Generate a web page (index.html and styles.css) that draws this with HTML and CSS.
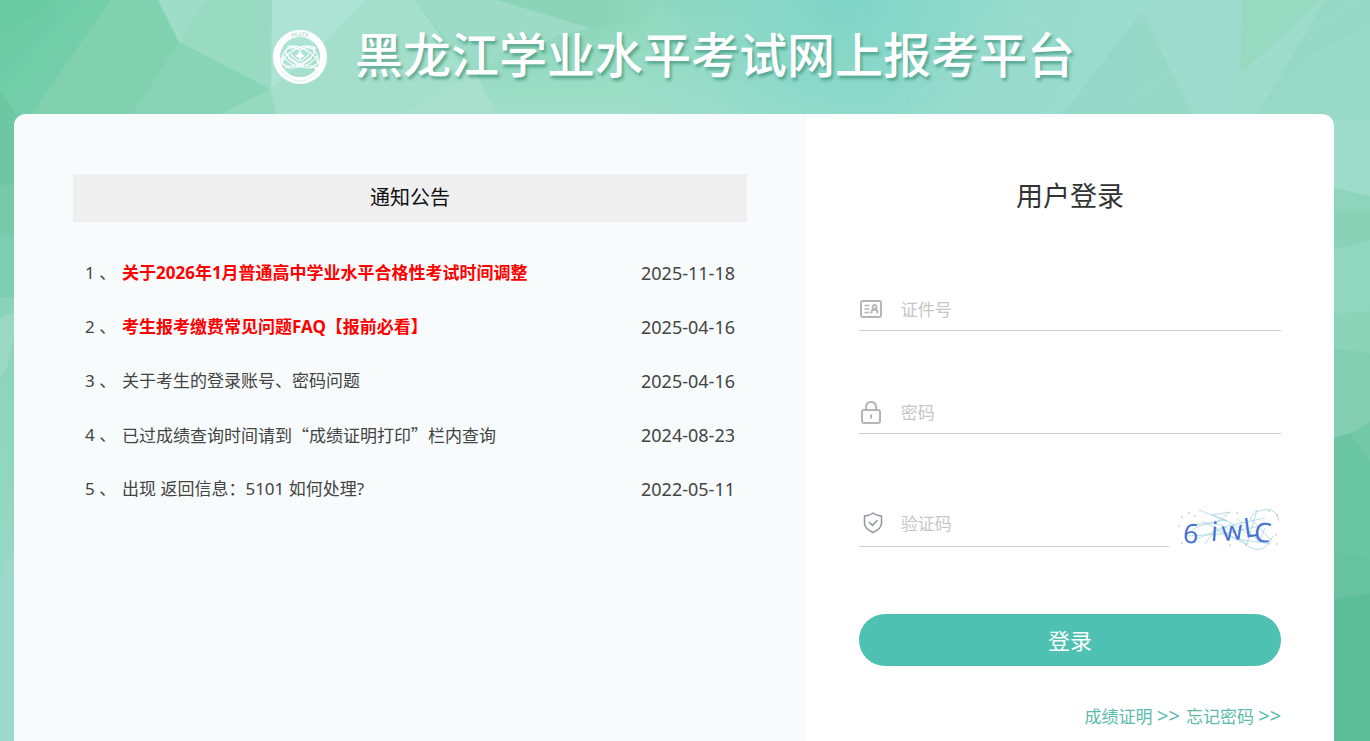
FILE: index.html
```html
<!DOCTYPE html>
<html lang="zh-CN">
<head>
<meta charset="utf-8">
<meta name="viewport" content="width=device-width, initial-scale=1">
<title>黑龙江学业水平考试网上报考平台</title>
<link rel="stylesheet" href="styles.css">
</head>
<body>
<svg class="backdrop" viewBox="0 0 1370 741" preserveAspectRatio="none" aria-hidden="true">
  <defs>
    <linearGradient id="dark" x1="0" y1="0" x2="1" y2="0.4"><stop offset="0" stop-color="#6bcba5"/><stop offset="1" stop-color="#83d2b3"/></linearGradient>
    <linearGradient id="mid" x1="0" y1="0" x2="0" y2="1"><stop offset="0" stop-color="#87d4b6"/><stop offset="1" stop-color="#a2dfcb"/></linearGradient>
    <linearGradient id="left" x1="0" y1="0" x2="0" y2="1"><stop offset="0" stop-color="#8bd3b8"/><stop offset="1" stop-color="#9bdbca"/></linearGradient>
    <radialGradient id="teal" gradientUnits="userSpaceOnUse" cx="850" cy="0" r="260"><stop offset="0" stop-color="#80d5c7"/><stop offset="0.4" stop-color="#8ad8c9" stop-opacity="0.8"/><stop offset="1" stop-color="#9bdccc" stop-opacity="0"/></radialGradient>
  </defs>
  <rect width="1370" height="741" fill="#9ddccb"/>
  <polygon points="0,0 158,0 179,42 270,89 222,120 0,120" fill="url(#dark)"/>
  <polygon points="0,0 60,0 0,38" fill="#6acba4"/>
  <polygon points="110,0 158,0 179,42 131,120 28,120" fill="#7fd1b0"/>
  <polygon points="179,42 270,89 222,120 128,120" fill="#87d4b6"/>
  <polygon points="158,0 206,0 179,42" fill="#9fddc8"/>
  <polygon points="206,0 272,0 271,89 179,42" fill="#99dac3"/>
  <polygon points="270,89 278,120 210,120" fill="#95d9c0"/>
  <polygon points="272,0 366,0 328,40 271,89" fill="#ade3d5"/>
  <polygon points="271,89 328,40 366,0 416,0 500,120 278,120" fill="#a4dfcc"/>
  <polygon points="416,0 500,0 860,0 860,120 500,120" fill="url(#mid)"/>
  <polygon points="416,0 498,0 590,28 560,35 475,72 450,45" fill="#9cdbc5"/>
  <polygon points="498,0 670,0 640,20 590,28" fill="#8bd4b7"/>
  <polygon points="475,72 500,120 390,120" fill="#a8e0cd"/>
  <polygon points="860,0 1000,0 860,120" fill="#93dacb"/>
  <rect x="590" width="520" height="120" fill="url(#teal)"/>
  <polygon points="660,0 705,40 730,120 620,120 600,60" fill="#a1dfc9" opacity="0.2"/>
  <polygon points="1035,0 1155,0 1060,120 920,120" fill="#98dccd" opacity="0.7"/>
  <polygon points="1142,12 1150,120 1058,120" fill="#95d8c7"/>
  <polygon points="1142,12 1195,120 1150,120" fill="#97d8c4"/>
  <polygon points="1142,12 1156,0 1242,0 1235,120 1195,120" fill="#9ddccd"/>
  <polygon points="1242,0 1320,0 1240,75" fill="#98d9c1"/>
  <polygon points="1325,0 1370,0 1370,24 1306,58 1262,112 1255,120" fill="#95d8c4"/>
  <polygon points="1306,58 1370,24 1370,120 1255,120" fill="#98dac6"/>
  <path d="M910 100 1035 18M1130 100 1290 0M1160 58 1240 8M1240 72 1370 -6" stroke="#b4e7d8" stroke-width="2" opacity="0.2"/>
  <polygon points="0,90 20,120 20,190 0,190" fill="#6dc7a3"/>
  <polygon points="0,186 20,180 20,241 0,234" fill="#76c9a9"/>
  <polygon points="0,234 20,239 20,300 0,300" fill="#7fcdb0"/>
  <polygon points="0,297 20,298 20,741 0,741" fill="url(#left)"/>
  <polygon points="0,318 20,310 8,365 0,380" fill="#99d9c2"/>
  <polygon points="0,575 20,540 20,741 0,741" fill="#9bdacb"/>
  <polygon points="1330,187 1370,196 1370,260 1330,250" fill="#8fd4bc"/>
  <polygon points="1330,210 1370,210 1370,280 1330,302" fill="#89d2b8"/>
  <polygon points="1330,250 1370,240 1370,355 1330,350" fill="#91d6be"/>
  <polygon points="1330,315 1370,311 1370,355 1330,350" fill="#8bd3b9"/>
  <polygon points="1330,348 1370,353 1370,422 1330,443" fill="#83ceb2"/>
  <polygon points="1330,440 1352,432 1370,422 1370,741 1330,741" fill="#69c5a2"/>
  <polygon points="1350,434 1370,422 1370,461" fill="#73c9a9"/>
  <polygon points="1330,550 1370,559 1370,741 1330,741" fill="#67c29f"/>
  <polygon points="1330,599 1370,594 1370,741 1330,741" fill="#5dbe9c"/>
</svg>

<header class="banner">
  <svg class="emblem" viewBox="0 0 54 54" role="img" aria-label="HLJZK">
    <circle cx="27" cy="27" r="23.500" fill="none" stroke="#fff" stroke-width="7"/>
    <defs>
      <path id="arc-top" d="M6 27A21 21 0 0 1 48 27"/>
    </defs>
    <text class="emblem-text"><textPath href="#arc-top" startOffset="50%">HLJZK</textPath></text>
    <path d="M9 41Q27 61 45 41" fill="none" stroke="#a4dfcc" stroke-width="1" stroke-dasharray="2 1" opacity="0.7"/>
    <g fill="none" stroke="#fff" stroke-width="1.200">
      <path d="M12 21Q18 15 27 20Q36 15 42 21M12 21Q16 30 27 34Q40 39 45 33Q47 29 42 21M42 21Q38 30 27 34Q14 39 9 33Q7 29 12 21"/>
      <path d="M14 17Q25 14 36 22Q44 27 45 33M40 17Q29 14 18 22Q10 27 9 33"/>
      <path d="M10 26Q16 35 27 37Q38 35 44 26M12 37Q22 40 30 34L39 28M42 37Q32 40 24 34L15 28"/>
      <path d="M18 24Q22 30 27 31Q32 30 36 24"/>
    </g>
    <path d="M27 20 29 24 32 26 28 28 27 31 26 28 22 26 25 24Z" fill="#fff"/>
    <g fill="#fff"><circle cx="41" cy="18" r="1.600"/><circle cx="9" cy="29" r="1.600"/><circle cx="43" cy="38" r="1.600"/></g>
  </svg>
  <h1 class="banner-title">黑龙江学业水平考试网上报考平台</h1>
</header>

<main class="card">
  <section class="notices">
    <h2 class="notices-title">通知公告</h2>
    <ol class="notice-list">
      <li class="notice"><span class="notice-number">1 、</span><a class="notice-link urgent" href="#">关于2026年1月普通高中学业水平合格性考试时间调整</a><time class="notice-date">2025-11-18</time></li>
      <li class="notice"><span class="notice-number">2 、</span><a class="notice-link urgent" href="#">考生报考缴费常见问题FAQ【报前必看】</a><time class="notice-date">2025-04-16</time></li>
      <li class="notice"><span class="notice-number">3 、</span><a class="notice-link" href="#">关于考生的登录账号、密码问题</a><time class="notice-date">2025-04-16</time></li>
      <li class="notice"><span class="notice-number">4 、</span><a class="notice-link cjk" href="#">已过成绩查询时间请到“成绩证明打印”栏内查询</a><time class="notice-date">2024-08-23</time></li>
      <li class="notice"><span class="notice-number">5 、</span><a class="notice-link" href="#">出现 返回信息：5101 如何处理?</a><time class="notice-date">2022-05-11</time></li>
    </ol>
  </section>

  <form class="login">
    <h2 class="login-title">用户登录</h2>
    <div class="field">
      <label class="field-icon" for="id-number" aria-label="证件号">
        <svg viewBox="0 0 24 24" fill="none" stroke="#b5b5b5" stroke-width="2"><rect x="2" y="4" width="20" height="16" rx="2"/><path d="M5.500 8.500h5M5.500 12h5M5.500 15.500h5" stroke-width="1.500"/><circle cx="15.500" cy="10" r="2" stroke-width="1.800"/><path d="M12.500 16.500v-1.500q0-2.500 3-2.500t3 2.500v1.500" stroke-width="1.800"/></svg>
      </label>
      <input class="field-input" id="id-number" type="text" placeholder="证件号">
    </div>
    <div class="field">
      <label class="field-icon" for="password" aria-label="密码">
        <svg viewBox="0 0 24 24" fill="none" stroke="#b5b5b5" stroke-width="2"><rect x="3" y="10" width="18" height="13" rx="2"/><path d="M7 10V7q0-5 5-5t5 5v3M12 14.500v4"/></svg>
      </label>
      <input class="field-input" id="password" type="password" placeholder="密码">
    </div>
    <div class="captcha-row">
      <div class="field">
        <label class="field-icon" for="captcha" aria-label="验证码">
          <svg viewBox="0 0 24 24" fill="none" stroke="#8f949f" stroke-width="1.500" stroke-linejoin="round" stroke-linecap="round"><path d="M14 2Q17 4.500 22.500 5v7.500Q22 18 14 21.500Q6 18 5.500 12.500V5Q11 4.500 14 2ZM10.500 11.500 13.500 14.500 18 9.500"/></svg>
        </label>
        <input class="field-input" id="captcha" type="text" placeholder="验证码">
      </div>
      <svg class="captcha-image" viewBox="0 -4 104 50" role="img" aria-label="6iwLC">
        <path d="M12 20 48 14 85 35M20 33 50 20 88 12M25 15 60 33 94 38M22 4 50 15 35 9 53 6 40 16M15 24Q40 8 62 32T96 30M28 38 38 24 70 38 80 4 73 12 94 34M10 30 45 28 92 18M60 12 82 36 88 22M80 6Q98 -2 102 15" fill="none" stroke="#8cc6dc" stroke-width="1" opacity="0.6"/>
        <g fill="#c9b3d6" opacity="0.7"><circle cx="5" cy="11" r="1"/><circle cx="12" cy="7" r="1"/><circle cx="60" cy="7" r="1"/><circle cx="99" cy="29" r="1"/><circle cx="5" cy="37" r="1"/><circle cx="100" cy="9" r="1"/><circle cx="69" cy="39" r="1"/></g>
        <g fill="#a9d8b3" opacity="0.7"><circle cx="18" cy="10" r="1"/><circle cx="2" cy="20" r="1"/><circle cx="92" cy="5" r="1"/><circle cx="53" cy="39" r="1"/><circle cx="100" cy="38" r="1"/></g>
        <g class="captcha-text"><text x="6" y="37" transform="rotate(6 12 29)">6</text><text x="34" y="35" transform="rotate(4 37 28)">i</text><text x="45" y="34" transform="rotate(-6 57 28)">w</text><text x="67" y="31" transform="rotate(-8 72 24)">L</text><text x="77" y="36" transform="rotate(6 85 28)">C</text></g>
      </svg>
    </div>
    <button class="submit" type="submit">登录</button>
    <nav class="links"><a href="#">成绩证明 <span class="arrows">&gt;&gt;</span></a><a href="#">忘记密码 <span class="arrows">&gt;&gt;</span></a></nav>
  </form>
</main>
</body>
</html>
```
FILE: styles.css
```css
* { box-sizing: border-box; }

body {
  margin: 0;
  min-height: 100vh;
  display: flex;
  flex-direction: column;
  position: relative;
  color: #444;
  font: 17px/24px "Noto Sans", "Noto Sans CJK SC", sans-serif;
}

h1, h2 { margin: 0; font-weight: 400; }
a { color: inherit; text-decoration: none; }

.backdrop {
  position: absolute;
  inset: 0;
  z-index: -1;
  width: 100%;
  height: 100%;
}

.banner {
  height: 114px;
  padding-right: 22px;
  display: flex;
  align-items: center;
  justify-content: center;
  gap: 28px;
}

.emblem { width: 54px; height: 54px; }

.emblem-text {
  fill: #8fd5bd;
  font-size: 6px;
  text-anchor: middle;
}

.banner-title {
  padding-bottom: 10px;
  color: #fff;
  font-family: "Noto Sans CJK SC", sans-serif;
  font-size: 48px;
  font-weight: 500;
  line-height: 64px;
  text-shadow: 2px 3px 3px rgba(30, 120, 95, 0.5);
}

.card {
  flex: 1;
  margin: 0 36px 0 14px;
  display: grid;
  grid-template-columns: 3fr 2fr;
  overflow: hidden;
  border-radius: 12px 12px 0 0;
  background: #fff;
}

.notices { padding: 60px 59px 0; background: #f7fbfc; }

.notices-title {
  background: #efefef;
  color: #111;
  font-size: 20px;
  line-height: 48px;
  text-align: center;
}

.notice-list {
  margin: 24px 0 0;
  padding: 0 12px;
  list-style: none;
}

.notice { display: flex; line-height: 54px; }
.notice-number { width: 37px; }
.notice-link { flex: 1; }
.notice-date { font-size: 18px; }
.urgent { color: #f00; font-weight: 700; }
.cjk { font-family: "Noto Sans CJK SC", sans-serif; }

.login {
  padding: 60px 10% 0;
  display: flex;
  flex-direction: column;
}

.login-title {
  margin-bottom: 70px;
  color: #333;
  font-size: 27px;
  line-height: 44px;
  text-align: center;
}

.field {
  flex: 1;
  margin-bottom: 60px;
  display: flex;
  align-items: center;
  gap: 18px;
  border-bottom: 1px solid #ccc;
}

.login > .field { flex: none; }
.field-icon, .field-icon svg { width: 24px; height: 24px; display: block; }

.field-input {
  flex: 1;
  min-width: 0;
  height: 42px;
  padding: 0;
  border: 0;
  outline: 0;
  background: none;
  color: #444;
  font: inherit;
}

.field-input::placeholder { color: #c6c6c6; opacity: 1; }

.captcha-row {
  margin-top: 8px;
  display: flex;
  align-items: flex-start;
  gap: 8px;
}

.captcha-row .field { margin: 0; padding-bottom: 2px; }
.captcha-image { width: 104px; height: 50px; }

.captcha-text {
  fill: #4470cf;
  font: 500 27px "Open Sans", sans-serif;
}

.submit {
  height: 52px;
  margin-top: 62px;
  padding: 0 0 2px;
  border: 0;
  border-radius: 26px;
  background: #4fc1b2;
  color: #fff;
  font: 22px "Noto Sans CJK SC", sans-serif;
}

.links {
  margin: 38px 0 12px;
  display: flex;
  justify-content: flex-end;
  gap: 6px;
  color: #5bbba9;
}

.arrows { font-size: 20px; }
```
